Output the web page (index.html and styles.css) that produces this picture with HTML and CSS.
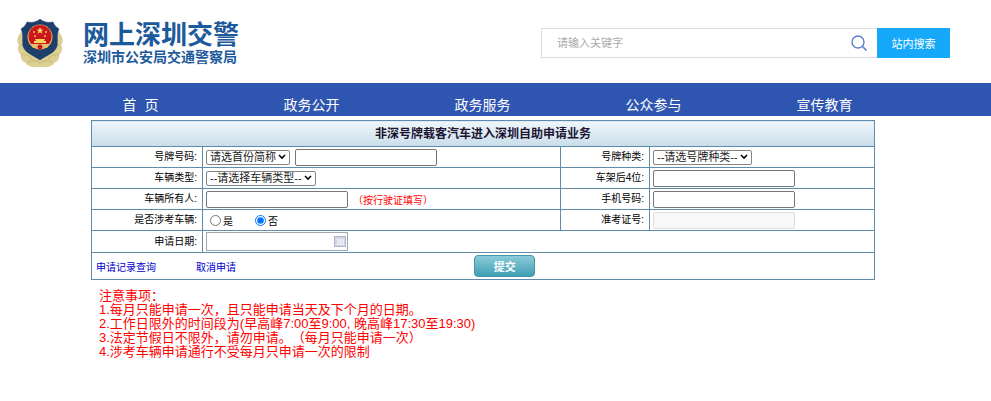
FILE: index.html
```html
<!DOCTYPE html>
<html lang="zh-CN">
<head>
<meta charset="UTF-8">
<title>非深号牌载客汽车进入深圳自助申请业务</title>
<link rel="stylesheet" href="styles.css">
</head>

<body>

<div class="header">
<div class="logo">
<svg class="badge" viewBox="0 0 46 50" aria-hidden="true">
<path fill="#dccf92" d="M5 13C0 18-1 24 2 27c-2 3-1 8 2 10-1 4 2 7 5 8 1 3 6 4 9 4h10c3 0 8-1 9-4 3-1 6-4 5-8 3-2 4-7 2-10 3-3 2-9-3-14L23 7z"/>
<path fill="none" stroke="#c2ae66" stroke-width="0.8" d="M3 27c4 0 6 3 8 6M4 37c5-1 8 1 11 4M10 45c4-3 8-3 13 0 5-3 9-3 13 0M43 27c-4 0-6 3-8 6M42 37c-5-1-8 1-11 4"/>
<path fill="#1c3f6b" stroke="#1c3f6b" stroke-width="0.6" d="M23 1c3 3 8 4 13 3 1 3 3 5 6 7-3 5-1 11-2 17-2 7-10 9-17 14C16 37 8 35 6 28 5 22 7 16 4 11c3-2 5-4 6-7 5 1 10 0 13-3z"/>
<circle cx="23" cy="19" r="12.500" fill="#e2c065"/>
<circle cx="23" cy="18.500" r="11.500" fill="#cc161d"/>
<path fill="#f5d55c" d="M23 9l1 2.500h2.600l-2 1.600.8 2.600-2.400-1.500-2.400 1.500.8-2.600-2-1.600H22zM18 21h10l-1 2h2v2H17v-2h2z"/>
<g fill="#f5d55c"><circle cx="17" cy="14" r="0.900"/><circle cx="29" cy="14" r="0.900"/><circle cx="18" cy="18" r="0.900"/><circle cx="28" cy="18" r="0.900"/></g>
<path fill="#e2c065" d="M13 26h20l-3 4H16z"/>
<circle cx="23" cy="29" r="2.500" fill="#cc161d"/>
</svg>
<div class="name">
<h1>网上深圳交警</h1>
<p>深圳市公安局交通警察局</p>
</div>
</div>
<form class="search">
<div class="keyword">
<input type="text" placeholder="请输入关键字" aria-label="请输入关键字">
<svg class="glass" viewBox="0 0 16 16" aria-hidden="true">
<circle cx="7" cy="7" r="6" fill="none" stroke="#5f7fc8" stroke-width="1.4"/>
<path d="M11.500 11.500l4 4" stroke="#5f7fc8" stroke-width="1.6"/>
</svg>
</div>
<button type="submit">站内搜索</button>
</form>
</div>

<div class="nav">
<a href="#">首&nbsp; 页</a>
<a href="#">政务公开</a>
<a href="#">政务服务</a>
<a href="#">公众参与</a>
<a href="#">宣传教育</a>
</div>

<div class="main">
<form>
<table class="apply">
<colgroup>
<col class="label">
<col>
<col class="label2">
<col class="field2">
</colgroup>
<thead>
<tr>
<th colspan="4">非深号牌载客汽车进入深圳自助申请业务</th>
</tr>
</thead>
<tbody>
<tr>
<td class="item"><label for="hphm">号牌号码:</label></td>
<td>
<div class="line">
<select id="province" aria-label="省份简称"><option>请选首份简称</option></select>
<input type="text" id="hphm">
</div>
</td>
<td class="item"><label for="hpzl">号牌种类:</label></td>
<td><div class="line"><select id="hpzl"><option>--请选号牌种类--</option></select></div></td>
</tr>
<tr>
<td class="item"><label for="cllx">车辆类型:</label></td>
<td><div class="line"><select id="cllx"><option>--请选择车辆类型--</option></select></div></td>
<td class="item"><label for="cjh">车架后4位:</label></td>
<td><div class="line"><input type="text" id="cjh"></div></td>
</tr>
<tr>
<td class="item"><label for="owner">车辆所有人:</label></td>
<td><div class="line"><input type="text" id="owner"><span class="tip">（按行驶证填写）</span></div></td>
<td class="item"><label for="mobile">手机号码:</label></td>
<td><div class="line"><input type="text" id="mobile"></div></td>
</tr>
<tr>
<td class="item">是否涉考车辆:</td>
<td>
<div class="line radios">
<label><input type="radio" name="sk">是</label>
<label><input type="radio" name="sk" checked>否</label>
</div>
</td>
<td class="item"><label for="zkzh">准考证号:</label></td>
<td><div class="line"><input type="text" id="zkzh" disabled></div></td>
</tr>
<tr class="date">
<td class="item"><label for="sqrq">申请日期:</label></td>
<td colspan="3"><div class="line"><input type="text" id="sqrq"></div></td>
</tr>
<tr class="submit">
<td colspan="4">
<div class="line">
<a href="#">申请记录查询</a>
<a href="#">取消申请</a>
<button type="submit">提交</button>
</div>
</td>
</tr>
</tbody>
</table>
</form>

<div class="notice">
<p>注意事项：</p>
<p>1.每月只能申请一次，且只能申请当天及下个月的日期。</p>
<p>2.工作日限外的时间段为(早高峰7:00至9:00, 晚高峰17:30至19:30)</p>
<p>3.法定节假日不限外，请勿申请。（每月只能申请一次）</p>
<p>4.涉考车辆申请通行不受每月只申请一次的限制</p>
</div>
</div>

</body>
</html>
```

FILE: styles.css
```css
* {
	box-sizing: border-box;
}

body {
	margin: 0;
	background-color: #fff;
	color: #000;
	font-family: "Liberation Sans", "Noto Sans CJK SC", sans-serif;
	font-size: 10px;
}

h1, p {
	margin: 0;
}

input, select, button {
	margin: 0;
	font-family: inherit;
	font-size: 11px;
}

/* header */
.header {
	display: flex;
	justify-content: space-between;
	align-items: center;
	height: 83px;
	padding: 3px 41px 0 17px;
}

.logo {
	display: flex;
	align-items: center;
	gap: 20px;
}

.badge {
	width: 46px;
	height: 50px;
}

.name {
	color: #1d5a9b;
}

.name h1 {
	font-size: 26px;
	line-height: 28px;
}

.name p {
	font-size: 14px;
	font-weight: bold;
	line-height: 16px;
}

.search {
	display: flex;
	height: 30px;
}

.keyword {
	display: flex;
	align-items: center;
	width: 336px;
	padding: 0 10px 0 15px;
	border: 1px solid #ddd;
	border-right: none;
}

.keyword input {
	flex: 1;
	padding: 0;
	border: none;
	outline: none;
}

.keyword input::placeholder {
	color: #aaa;
}

.glass {
	width: 16px;
	height: 16px;
}

.search button {
	width: 73px;
	padding: 0;
	border: none;
	background-color: #16a9fa;
	color: #fff;
}

/* nav */
.nav {
	display: grid;
	grid-template-columns: repeat(5, 1fr);
	height: 33px;
	padding: 10px 81px 0 55px;
	background-color: #2e55b0;
}

.nav a {
	color: #fff;
	font-size: 14px;
	line-height: 24px;
	text-align: center;
	text-decoration: none;
}

/* form table */
.main {
	padding: 4px 116px 0 91px;
}

.apply {
	width: 100%;
	table-layout: fixed;
	border-collapse: collapse;
}

.label {
	width: 111px;
}

.label2 {
	width: 89px;
}

.field2 {
	width: 225px;
}

.apply th, .apply td {
	height: 21px;
	padding: 0 3px;
	border: 1px solid #5f8bad;
}

.apply th {
	height: 26px;
	background: linear-gradient(#eef6fa, #c9dde9);
	color: #1c1433;
	font-size: 12px;
	line-height: 16px;
}

.apply .item {
	padding-right: 5px;
	line-height: 16px;
	text-align: right;
}

.line {
	display: flex;
	align-items: center;
	gap: 5px;
}

.line select {
	height: 15px;
	padding: 0 13px 0 3px;
	border: 1px solid #858585;
	border-radius: 2px;
	appearance: none;
	background: #fff url("data:image/svg+xml,%3Csvg xmlns='http://www.w3.org/2000/svg' viewBox='0 0 8 6'%3E%3Cpath d='M1 1l3 3 3-3' fill='none' stroke='%23000' stroke-width='1.6'/%3E%3C/svg%3E") no-repeat right 3px center / 8px 6px;
	color: #222;
	line-height: 13px;
}

.line input[type="text"] {
	width: 142px;
	height: 17px;
	padding: 0 2px;
	border: 1px solid #767676;
	border-radius: 2px;
}

.line input[type="text"]:disabled {
	border-color: #ddd;
	background-color: #f8f8f8;
}

.tip {
	color: #f00;
}

.radios {
	gap: 22px;
	padding-left: 4px;
}

.radios label {
	display: flex;
	align-items: center;
	gap: 2px;
}

.radios input {
	width: 11px;
	height: 11px;
}

.apply .date td {
	height: 22px;
}

.line input#sqrq {
	height: 19px;
	border-color: #a0a8b0;
	border-radius: 0;
	background: url("data:image/svg+xml,%3Csvg xmlns='http://www.w3.org/2000/svg' viewBox='0 0 12 11'%3E%3Crect x='.5' y='.5' width='11' height='10' fill='%23d5d5e6' stroke='%23b4b4cc'/%3E%3Cpath d='M3 4h7M3 6h7M3 8h7M4 3v6M6.500 3v6M9 3v6' stroke='%23fff' stroke-width='.6'/%3E%3C/svg%3E") no-repeat right 1px center / 12px 11px;
}

.apply .submit td {
	height: 27px;
	padding-left: 4px;
}

.submit .line {
	gap: 0;
}

.submit a {
	width: 100px;
	color: #00c;
	text-decoration: none;
}

.submit button {
	width: 61px;
	height: 22px;
	margin-left: 23%;
	padding: 0;
	border: 1px solid #4795a8;
	border-radius: 4px;
	background: linear-gradient(#8ccbd8, #3f9fb5);
	color: #fff;
	font-weight: bold;
}

/* notice */
.notice {
	padding: 9px 8px;
	color: #f00;
	font-size: 13px;
	line-height: 14px;
	text-spacing-trim: space-all;
}
```
